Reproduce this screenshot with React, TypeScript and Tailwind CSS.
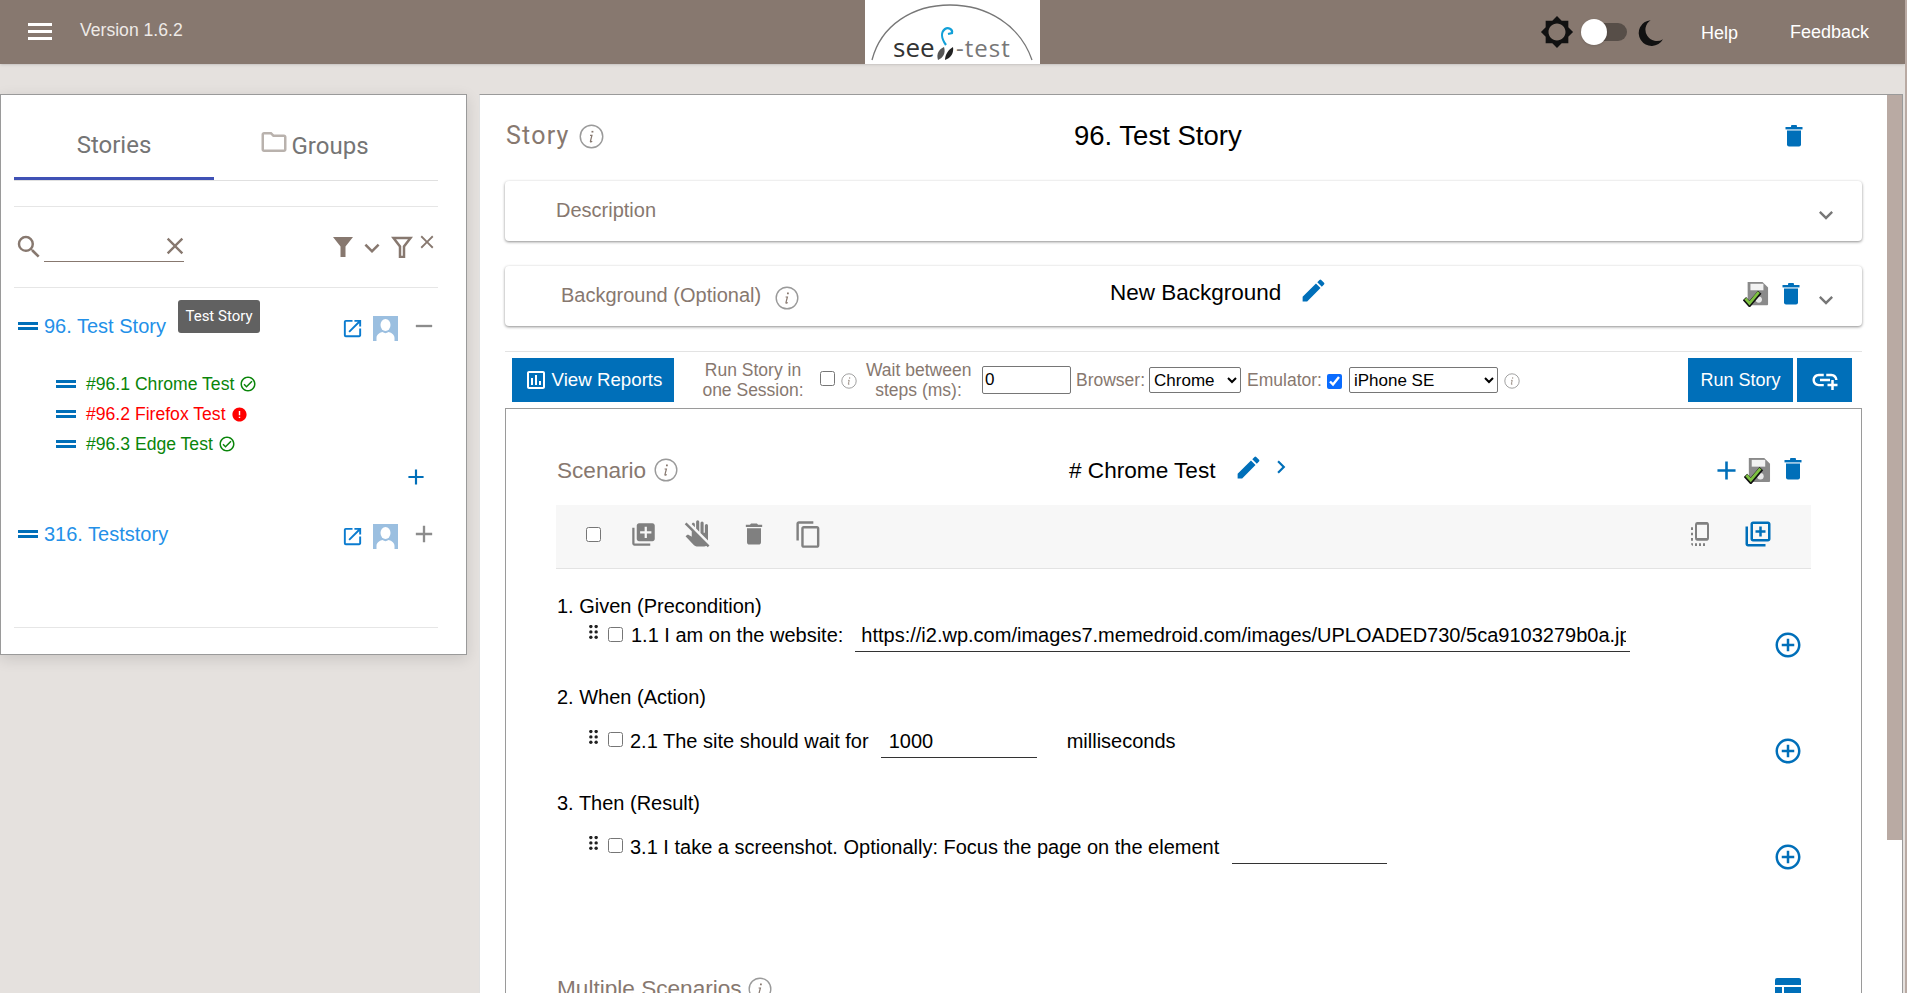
import React from "react";
import {
  MdDelete, MdEdit, MdOpenInNew, MdSearch, MdClose, MdExpandMore, MdChevronRight, MdAdd, MdRemove,
  MdOutlineFolder, MdLibraryAdd, MdOutlineLibraryAdd, MdDoNotTouch, MdContentCopy, MdFlipToFront,
  MdAddCircleOutline, MdOutlineCheckCircle, MdError, MdOutlineAssessment, MdAddLink, MdBrightness5,
} from "react-icons/md";

const Info = ({ className }: { className: string }) => (
  <svg viewBox="0 0 24 24" className={className} fill="none">
    <circle cx="12" cy="12" r="10.8" stroke="#9a9a9a" strokeWidth="1.4" />
    <path d="M12.9 6.6v1.6" stroke="#87786f" strokeWidth="1.8" />
    <path d="M10.6 11h1.8l-1.4 5.4c-.2.9.5 1 1.7.2" stroke="#87786f" strokeWidth="1.2" />
  </svg>
);

const Trash = ({ className }: { className: string }) => (
  <svg viewBox="0 0 18 22" className={className}>
    <rect x="0.5" y="2.5" width="17" height="2.4" fill="#006fb9" />
    <rect x="6" y="0.5" width="6" height="2.4" rx="1" fill="#006fb9" />
    <path d="M2 6h14v14a2 2 0 0 1-2 2H4a2 2 0 0 1-2-2z" fill="#006fb9" />
  </svg>
);

const SaveCheck = ({ className }: { className: string }) => (
  <svg viewBox="0 0 28 28" className={className}>
    <path d="M5 1h16l6 6v18a1 1 0 0 1-1 1H5z" fill="#8a8a8a" />
    <rect x="8" y="3" width="14" height="7" fill="#f2f2f2" />
    <circle cx="17" cy="20" r="3.4" fill="#e8e8e8" />
    <path d="M1.5 19l5.5 6 11-13" fill="none" stroke="#111" strokeWidth="5" />
    <path d="M2.5 19l4.5 5 10-12" fill="none" stroke="#7ec242" strokeWidth="3" />
  </svg>
);

const Handle = () => (
  <span className="flex flex-col gap-[2px] w-5 shrink-0">
    <span className="h-[3px] bg-[#006fb9]" />
    <span className="h-[3px] bg-[#006fb9]" />
  </span>
);

const Avatar = () => (
  <svg viewBox="0 0 25 25" className="w-[25px] h-[25px]">
    <rect width="25" height="25" fill="#9bbfe0" />
    <ellipse cx="12.5" cy="9" rx="5" ry="6" fill="#fff" />
    <path d="M3.5 25v-3c0-4 4-5.5 6-6 2 1.5 4 1.5 6 0 2 .5 6 2 6 6v3z" fill="#fff" />
  </svg>
);

const Grip = () => (
  <svg viewBox="0 0 8 16" className="w-[9px] h-[17px] shrink-0 mt-[-2px]" fill="#222">
    {[1.5, 6.5, 11.5].map((y) => (
      <g key={y}>
        <circle cx="1.5" cy={y} r="1.6" />
        <circle cx="6.5" cy={y} r="1.6" />
      </g>
    ))}
  </svg>
);

const Logo = () => (
  <svg viewBox="0 0 175 64" className="w-[175px] h-16 bg-white shrink-0">
    <path d="M7 60C16 25 48 5 85 5s70 20 82 55" fill="none" stroke="#777" strokeWidth="1.3" />
    <text x="28" y="57" fontFamily="'Open Sans', sans-serif" fontSize="26" fill="#333">see</text>
    <path d="M73 60c-2-6 1-11 6-13 2 6-1 11-6 13z" fill="#555" />
    <path d="M80 60c0-5 3-10 8-13 1 6-2 11-8 13z" fill="#222" />
    <path d="M81 45c-5-7-5-13-1-16 3-2 8 0 7 4l-4 1" fill="none" stroke="#12a0d8" strokeWidth="2.2" />
    <text x="91" y="57" fontFamily="'Open Sans', sans-serif" fontSize="24" fill="#777" letterSpacing="1">-test</text>
  </svg>
);

const StoryRow = ({ title, end, tip }: { title: string; end: React.ReactNode; tip?: boolean }) => (
  <div className="relative flex items-center h-6 pl-1">
    <Handle />
    <span className="ml-[6px] text-[20px] leading-6 text-[#2390e8]">{title}</span>
    {tip && (
      <span className="absolute left-[164px] top-[-14px] w-[82px] h-[33px] rounded-[3px] bg-[#616161] text-white text-[15px] leading-[32px] text-center font-['Roboto',sans-serif]">
        Test Story
      </span>
    )}
    <span className="ml-auto flex items-center mt-[4px]">
      <MdOpenInNew className="w-[23px] h-[23px] text-[#0a7bcf]" />
      <span className="ml-[9px]"><Avatar /></span>
      <span className="ml-3">{end}</span>
    </span>
  </div>
);

const Sub = ({ title, red }: { title: string; red?: boolean }) => (
  <div className={red ? "flex items-center h-[30px] pl-[42px] text-[#ff0000]" : "flex items-center h-[30px] pl-[42px] text-[#0a850a]"}>
    <Handle />
    <span className="ml-[10px] text-[17.6px] leading-6">{title}</span>
    {red ? <MdError className="ml-[5px] w-[17px] h-[17px] text-[#ff0000]" /> : <MdOutlineCheckCircle className="ml-[5px] w-[18px] h-[18px] text-[#0a850a]" />}
  </div>
);

const Plus = ({ className }: { className: string }) => (
  <MdAddCircleOutline className={"ml-auto mr-[58px] w-[30px] h-[30px] text-[#006fb9] shrink-0 " + className} />
);

const Check = () => <input type="checkbox" className="w-[15px] h-[15px] shrink-0" />;

export default function App() {
  return (
    <div className="h-[993px] w-[1907px] overflow-hidden flex bg-white font-['Liberation_Sans',Arial,sans-serif]">
      <div className="w-[1905px] h-full flex flex-col bg-[#e5e1de]">
        <header className="h-16 shrink-0 flex items-center bg-[#87786f] shadow-sm">
          <div className="w-[865px] flex items-center pl-7">
            <span className="w-6 flex flex-col gap-[4px]">
              <span className="h-[3px] bg-white" />
              <span className="h-[3px] bg-white" />
              <span className="h-[3px] bg-white" />
            </span>
            <span className="ml-7 text-[17.6px] text-[#eeeae7] mt-[-3px]">Version 1.6.2</span>
          </div>
          <Logo />
          <div className="flex items-center ml-[500px]">
            <MdBrightness5 className="w-[34px] h-[34px] text-[#111]" />
            <span className="relative ml-[12px] w-[41px] h-[18px] rounded-full bg-[#574e48]">
              <span className="absolute left-[-5px] top-[-4px] w-[26px] h-[26px] rounded-full bg-white shadow" />
            </span>
            <svg viewBox="0 0 24 24" className="ml-[9px] w-[27px] h-[27px]" fill="#111">
              <path d="M13 1A11.5 11.5 0 1 0 24 18A10 10 0 0 1 13 1z" />
            </svg>
            <span className="ml-[38px] text-[18px] text-white mt-[2px]">Help</span>
            <span className="ml-[52px] text-[18px] text-white">Feedback</span>
          </div>
        </header>

        <div className="flex-1 min-h-0 flex items-start pt-[30px] gap-3 pr-[2px]">
          <aside className="w-[467px] shrink-0 h-[561px] bg-white border border-[#9a9a9a] shadow-[0_4px_14px_rgba(0,0,0,0.12)] pl-[13px] pr-[28px]">
            <div className="flex h-[86px] border-b border-[#e0e0e0]">
              <div className="w-[200px] h-[85px] border-b-[3px] border-[#3f51b5] flex items-center justify-center pt-[18px] text-[24px] text-[#757575] font-['Roboto',sans-serif]">
                Stories
              </div>
              <div className="w-[200px] h-[85px] flex items-center justify-center pt-4 text-[24px] text-[#757575] font-['Roboto',sans-serif]">
                <MdOutlineFolder className="w-[30px] h-[30px] text-[#b9b2ad] mt-[-8px] mr-[2px]" />
                Groups
              </div>
            </div>
            <div className="mt-[25px] border-t border-[#e6e6e6] h-[82px] flex items-start border-b">
              <MdSearch className="mt-[25px] w-[30px] h-[30px] text-[#87786f]" />
              <div className="mt-[20px] w-[140px] h-[35px] border-b border-[#87786f] flex items-center justify-end">
                <MdClose className="w-7 h-7 text-[#87786f] mr-[-5px] mt-[3px]" />
              </div>
              <svg viewBox="0 0 22 22" className="ml-[148px] mt-[29px] w-[22px] h-[22px]" fill="#87786f"><path d="M1 1h20l-7.5 9.5V21h-5V10.5z" /></svg>
              <MdExpandMore className="ml-[3px] mt-[26px] w-[30px] h-[30px] text-[#87786f]" />
              <svg viewBox="0 0 22 22" className="ml-[4px] mt-[29px] w-[22px] h-[22px]" fill="none" stroke="#87786f" strokeWidth="2.5"><path d="M2.5 2h17l-6.5 8.5V21h-4V10.5z" /></svg>
              <MdClose className="ml-[3px] mt-[24px] w-[22px] h-[22px] text-[#87786f]" />
            </div>
            <div className="pt-[26px]">
              <StoryRow title="96. Test Story" tip end={<MdRemove className="w-7 h-7 text-[#8c8c8c] mt-[-5px]" />} />
              <div className="mt-[31px]">
                <Sub title="#96.1 Chrome Test" />
                <Sub title="#96.2 Firefox Test" red />
                <Sub title="#96.3 Edge Test" />
              </div>
              <div className="h-9 flex items-center justify-end pr-[9px]">
                <MdAdd className="w-[26px] h-[26px] text-[#006fb9]" />
              </div>
              <div className="mt-[27px]">
                <StoryRow title="316. Teststory" end={<MdAdd className="w-7 h-7 text-[#8c8c8c] mt-[-5px]" />} />
              </div>
            </div>
            <div className="mt-[81px] border-t border-[#e6e6e6]" />
          </aside>

          <main className="flex-1 min-w-0 h-[920px] bg-white border-t border-[#9a9a9a] border-l border-l-[#e0e0e0] flex">
            <div className="flex-1 min-w-0 pl-[25px] pr-[25px]">
              <div className="relative h-[86px] flex items-center pb-[4px]">
                <span className="text-[25px] tracking-[1.2px] text-[#87786f] font-['Roboto',sans-serif] ml-[1px]">Story</span>
                <Info className="ml-[9px] w-[25px] h-[25px]" />
                <span className="absolute left-[569px] text-[27.5px] text-black">96. Test Story</span>
                <Trash className="ml-auto mr-[59px] w-[18px] h-[23px] mb-[2px]" />
              </div>

              <div className="h-[60px] rounded-[4px] bg-white shadow-[0_1px_3px_rgba(0,0,0,0.45)] flex items-center pl-[51px] pr-[22px]">
                <span className="text-[20px] text-[#87786f] mt-[-2px]">Description</span>
                <MdExpandMore className="ml-auto w-7 h-7 text-[#777] mt-[7px]" />
              </div>

              <div className="relative mt-[25px] h-[60px] rounded-[4px] bg-white shadow-[0_1px_3px_rgba(0,0,0,0.45)] flex items-center pl-[56px] pr-[22px]">
                <span className="text-[20px] text-[#87786f] mt-[-2px]">Background (Optional)</span>
                <Info className="ml-[14px] w-6 h-6 mt-[3px]" />
                <span className="absolute left-[605px] top-[10px] text-[22.5px] text-black">New Background</span>
                <MdEdit className="absolute left-[794px] top-[10px] w-[29px] h-[29px] text-[#006fb9]" />
                <SaveCheck className="ml-auto w-[26px] h-[26px] mr-[13px] mt-[-5px]" />
                <Trash className="w-[18px] h-[23px] mr-3 mt-[-6px]" />
                <MdExpandMore className="w-7 h-7 text-[#777] mt-[7px]" />
              </div>

              <div className="mt-[25px] border-t border-[#e3e3e3] h-px" />

              <div className="mt-[6px] h-11 flex items-center pl-[7px] pr-[10px] text-[17.5px] leading-5 text-[#87786f]">
                <button className="w-[162px] h-11 bg-[#006fb9] text-white text-[18.7px] flex items-center justify-center gap-[4px]">
                  <MdOutlineAssessment className="w-6 h-6" /> View Reports
                </button>
                <span className="ml-[28px] w-[102px] text-center whitespace-nowrap mt-[-1px]">Run Story in<br />one Session:</span>
                <span className="ml-4"><Check /></span>
                <Info className="ml-[6px] w-4 h-4 mt-[2px]" />
                <span className="ml-[9px] w-[105px] text-center whitespace-nowrap mt-[-1px]">Wait between<br />steps (ms):</span>
                <input defaultValue="0" className="ml-[11px] w-[89px] h-7 border border-[#767676] rounded-[2px] text-black text-[17px] px-[2px]" />
                <span className="ml-[5px]">Browser:</span>
                <select className="ml-1 w-[92px] h-[26px] border border-[#767676] rounded-[2px] bg-white text-black text-[17px]">
                  <option>Chrome</option>
                </select>
                <span className="ml-[6px]">Emulator:</span>
                <input type="checkbox" defaultChecked className="ml-[5px] w-[15px] h-[15px] accent-[#0a6cff] mt-[3px]" />
                <select className="ml-[7px] w-[149px] h-[26px] border border-[#767676] rounded-[2px] bg-white text-black text-[17px]">
                  <option>iPhone SE</option>
                </select>
                <Info className="ml-[6px] w-4 h-4 mt-[2px]" />
                <button className="ml-auto w-[105px] h-11 bg-[#006fb9] text-white text-[18px]">Run Story</button>
                <button className="ml-1 w-[55px] h-11 bg-[#006fb9] text-white flex items-center justify-center">
                  <MdAddLink className="w-[30px] h-[30px]" />
                </button>
              </div>

              <section className="mt-[6px] border border-[#9a9a9a] h-[700px]">
                <div className="relative h-[96px] pl-[51px] pr-[59px] flex items-center pt-[26px]">
                  <span className="text-[22.6px] text-[#87786f] mt-[1px]">Scenario</span>
                  <Info className="ml-[8px] w-6 h-6" />
                  <span className="absolute left-[563px] top-[48px] text-[22.6px] leading-7 text-black">{"# Chrome Test"}</span>
                  <MdEdit className="absolute left-[728px] top-[44px] w-[29px] h-[29px] text-[#006fb9]" />
                  <MdChevronRight className="absolute left-[762px] top-[45px] w-[26px] h-[26px] text-[#006fb9]" />
                  <MdAdd className="ml-auto w-[31px] h-[31px] text-[#006fb9]" />
                  <SaveCheck className="ml-[2px] w-[27px] h-[27px] mr-[13px]" />
                  <Trash className="w-[18px] h-[23px] mt-[-3px]" />
                </div>

                <div className="mx-[50px] h-16 bg-[#f7f7f7] border-b border-[#e3e3e3] flex items-center pl-[30px] pr-[38px] pb-[5px] text-[#808080]">
                  <Check />
                  <MdLibraryAdd className="ml-[29px] w-[27px] h-[27px]" />
                  <MdDoNotTouch className="ml-[26px] w-[30px] h-[30px]" />
                  <MdDelete className="ml-[27px] w-7 h-7" />
                  <MdContentCopy className="ml-[26px] w-[29px] h-[29px]" />
                  <span className="ml-auto flex"><MdFlipToFront preserveAspectRatio="none" className="w-6 h-8" /></span>
                  <MdOutlineLibraryAdd className="ml-[31px] w-[30px] h-[30px] text-[#006fb9]" />
                </div>

                <div className="pl-[51px] text-[20px] leading-6 text-black">
                  <div className="mt-[25px]">1. Given (Precondition)</div>
                  <div className="mt-[5px] pl-[32px] flex items-start">
                    <span className="mt-[4px] flex items-center"><Grip /><span className="ml-[10px] flex"><Check /></span></span>
                    <span className="ml-2">1.1 I am on the website:</span>
                    <input readOnly defaultValue="https://i2.wp.com/images7.memedroid.com/images/UPLOADED730/5ca9103279b0a.jpeg" className="ml-3 w-[775px] h-[31px] mt-[-2px] pb-px border-b border-[#333] pl-[6px] pr-[4px] text-[20px]" />
                    <Plus className="mt-[7px]" />
                  </div>
                  <div className="mt-[25px]">2. When (Action)</div>
                  <div className="mt-[20px] pl-[32px] flex items-start">
                    <span className="mt-[3px] flex items-center"><Grip /><span className="ml-[10px] flex"><Check /></span></span>
                    <span className="ml-[7px]">2.1 The site should wait for</span>
                    <input readOnly defaultValue="1000" className="ml-3 w-[156px] h-[31px] mt-[-2px] pb-px border-b border-[#333] pl-2 text-[20px]" />
                    <span className="ml-[30px]">milliseconds</span>
                    <Plus className="mt-[7px]" />
                  </div>
                  <div className="mt-[25px]">3. Then (Result)</div>
                  <div className="mt-[20px] pl-[32px] flex items-start">
                    <span className="mt-[3px] flex items-center"><Grip /><span className="ml-[10px] flex"><Check /></span></span>
                    <span className="ml-[7px]">3.1 I take a screenshot. Optionally: Focus the page on the element</span>
                    <input readOnly className="ml-[13px] w-[155px] h-[31px] mt-[-2px] border-b border-[#333]" />
                    <Plus className="mt-[7px]" />
                  </div>
                  <div className="mt-[102px] flex items-center pr-[60px] text-[#87786f] text-[22.6px]">
                    <span>Multiple Scenarios</span>
                    <Info className="ml-[6px] w-6 h-6" />
                    <svg viewBox="0 0 26 26" className="ml-auto w-[26px] h-[26px] mt-[4px]" fill="#006fb9">
                      <path d="M2 0h22a2 2 0 0 1 2 2v5H0V2a2 2 0 0 1 2-2zM0 9h7v17H2a2 2 0 0 1-2-2zM9 9h17v15a2 2 0 0 1-2 2H9z" />
                    </svg>
                  </div>
                </div>
              </section>
            </div>
            <div className="w-4 shrink-0 border-r border-[#9a9a9a]">
              <div className="h-[745px] bg-[#b9aaa3]" />
            </div>
          </main>
        </div>
      </div>
      <div className="w-[2px] h-full bg-[#b9aaa3]" />
    </div>
  );
}
